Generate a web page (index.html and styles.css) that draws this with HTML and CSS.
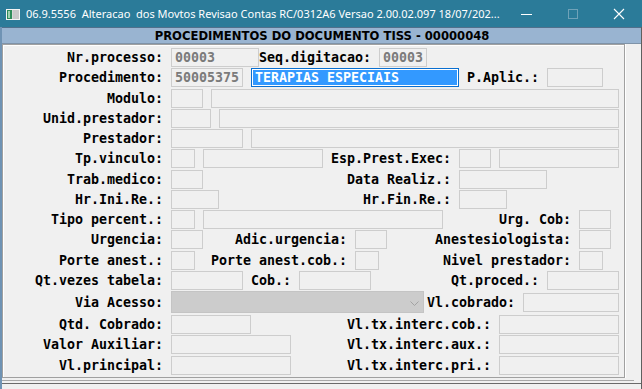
FILE: index.html
```html
<!DOCTYPE html>
<html>
<head>
    <title>Procedimentos do Documento TISS</title>
    <link rel="stylesheet" href="styles.css">
</head>
<body>
    <div class="window">
        <div class="titlebar">
            <svg class="app-icon" width="14" height="11" viewBox="0 0 14 11">
                <rect x="0.5" y="0.5" width="13" height="10" fill="#d8d8d8" stroke="#f4f4f4"/>
                <rect x="1" y="1" width="5" height="9" fill="#2e8c5a"/>
                <rect x="2" y="2" width="2" height="7" fill="#9fd1b0"/>
                <rect x="7" y="1" width="6" height="9" fill="#c9c9c9"/>
            </svg>
            <span class="title">06.9.5556  Alteracao  dos Movtos Revisao Contas RC/0312A6 Versao 2.00.02.097 18/07/202...</span>
            <div class="controls">
                <span class="ctl">
                    <svg width="12" height="12" viewBox="0 0 12 12"><path d="M0 6.5H11" stroke="#fff" stroke-width="1"/></svg>
                </span>
                <span class="ctl">
                    <svg width="12" height="12" viewBox="0 0 12 12"><rect x="1.5" y="1.5" width="9" height="9" fill="none" stroke="#6fa2b8"/></svg>
                </span>
                <span class="ctl">
                    <svg width="12" height="12" viewBox="0 0 12 12"><path d="M1 1L11 11M11 1L1 11" stroke="#fff" stroke-width="1.1"/></svg>
                </span>
            </div>
        </div>

        <div class="frame">
            <div class="caption">PROCEDIMENTOS DO DOCUMENTO TISS - 00000048</div>

            <div class="panel">
                <div class="row">
                    <span class="lbl w20">Nr.processo:</span>
                    <span class="fld w11">00003</span>
                    <span class="lbl w14">Seq.digitacao:</span>
                    <span class="fld w6">00003</span>
                </div>
                <div class="row">
                    <span class="lbl w20">Procedimento:</span>
                    <span class="fld w9">50005375</span>
                    <span class="fld w26 selected">TERAPIAS ESPECIAIS</span>
                    <span class="lbl w10">P.Aplic.:</span>
                    <span class="fld w7"></span>
                </div>
                <div class="row">
                    <span class="lbl w20">Modulo:</span>
                    <span class="fld w4"></span>
                    <span class="fld w51"></span>
                </div>
                <div class="row">
                    <span class="lbl w20">Unid.prestador:</span>
                    <span class="fld w5"></span>
                    <span class="fld w50"></span>
                </div>
                <div class="row">
                    <span class="lbl w20">Prestador:</span>
                    <span class="fld w9"></span>
                    <span class="fld w46"></span>
                </div>
                <div class="row">
                    <span class="lbl w20">Tp.vinculo:</span>
                    <span class="fld w3"></span>
                    <span class="fld w15"></span>
                    <span class="lbl w16">Esp.Prest.Exec:</span>
                    <span class="fld w4"></span>
                    <span class="fld w15"></span>
                </div>
                <div class="row">
                    <span class="lbl w20">Trab.medico:</span>
                    <span class="fld w4"></span>
                    <span class="lbl w31">Data Realiz.:</span>
                    <span class="fld w11"></span>
                </div>
                <div class="row">
                    <span class="lbl w20">Hr.Ini.Re.:</span>
                    <span class="fld w6"></span>
                    <span class="lbl w29">Hr.Fin.Re.:</span>
                    <span class="fld w6"></span>
                </div>
                <div class="row">
                    <span class="lbl w20">Tipo percent.:</span>
                    <span class="fld w3"></span>
                    <span class="fld w30"></span>
                    <span class="lbl w16">Urg. Cob:</span>
                    <span class="fld w4"></span>
                </div>
                <div class="row">
                    <span class="lbl w20">Urgencia:</span>
                    <span class="fld w4"></span>
                    <span class="lbl w18">Adic.urgencia:</span>
                    <span class="fld w4"></span>
                    <span class="lbl w23">Anestesiologista:</span>
                    <span class="fld w4"></span>
                </div>
                <div class="row">
                    <span class="lbl w20">Porte anest.:</span>
                    <span class="fld w3"></span>
                    <span class="lbl w19">Porte anest.cob.:</span>
                    <span class="fld w3"></span>
                    <span class="lbl w24">Nivel prestador:</span>
                    <span class="fld w3"></span>
                </div>
                <div class="row">
                    <span class="lbl w20">Qt.vezes tabela:</span>
                    <span class="fld w9"></span>
                    <span class="lbl w6">Cob.:</span>
                    <span class="fld w9"></span>
                    <span class="lbl w21">Qt.proced.:</span>
                    <span class="fld w9"></span>
                </div>
                <div class="row row-combo">
                    <span class="lbl w20">Via Acesso:</span>
                    <span class="combo">
                        <svg class="chevron" width="9" height="5" viewBox="0 0 9 5"><path d="M0.5 0.5L4.5 4.5L8.5 0.5" fill="none" stroke="#a3a3a3"/></svg>
                    </span>
                    <span class="lbl w-vl">Vl.cobrado:</span>
                    <span class="fld w12"></span>
                </div>
                <div class="row row-low">
                    <span class="lbl w20">Qtd. Cobrado:</span>
                    <span class="fld w10"></span>
                    <span class="lbl w30">Vl.tx.interc.cob.:</span>
                    <span class="fld w15"></span>
                </div>
                <div class="row row-low">
                    <span class="lbl w20">Valor Auxiliar:</span>
                    <span class="fld w15"></span>
                    <span class="lbl w25">Vl.tx.interc.aux.:</span>
                    <span class="fld w15"></span>
                </div>
                <div class="row row-low">
                    <span class="lbl w20">Vl.principal:</span>
                    <span class="fld w15"></span>
                    <span class="lbl w25">Vl.tx.interc.pri.:</span>
                    <span class="fld w15"></span>
                </div>
            </div>

            <div class="base-line"></div>
            <div class="base-line dark"></div>
        </div>
    </div>
</body>
</html>
```

FILE: styles.css
```css
html, body {
    margin: 0;
    padding: 0;
}

body {
    background: #f0f0f0;
    width: 642px;
    height: 389px;
    overflow: hidden;
}

.window {
    width: 642px;
    height: 389px;
}

/* title bar */
.titlebar {
    height: 27px;
    background: #2b7b99;
    display: flex;
    align-items: center;
    color: #fff;
    font-family: "Noto Sans", sans-serif;
    font-size: 11px;
}

.app-icon {
    margin-left: 6px;
    margin-top: 1px;
    flex: none;
}

.title {
    margin-left: 6px;
    white-space: pre;
    flex: none;
}

.controls {
    display: flex;
    margin-left: auto;
}

.ctl {
    width: 46px;
    height: 27px;
    display: flex;
    align-items: center;
    justify-content: center;
}

/* frame */
.frame {
    border-left: 2px solid #6f93b4;
    border-right: 1px solid #5f5f5f;
    height: 362px;
}

.caption {
    height: 15px;
    border-top: 1px solid #50708c;
    border-bottom: 1px solid #7f93a8;
    background: #99b4d1;
    font-family: "DejaVu Sans", sans-serif;
    font-weight: bold;
    font-size: 11.6px;
    line-height: 16px;
    text-align: center;
    color: #000;
    padding-left: 1px;
}

.panel {
    width: 623px;
    box-sizing: border-box;
    border: 1px solid #a0a0a0;
    box-shadow: inset 1px 1px 0 #fff, 1px 0 0 #fff;
    padding: 2.5px 0 1.5px;
    font-family: "DejaVu Sans Mono", "Liberation Mono", monospace;
    font-weight: bold;
    font-size: 13.3px;
    color: #000;
}

.row {
    display: flex;
    align-items: center;
    height: 20.25px;
}

.row-combo {
    height: 23.25px;
}

.row-low {
    height: 20.5px;
}

.lbl {
    text-align: right;
    white-space: nowrap;
    flex: none;
    line-height: 19px;
}

.fld {
    flex: none;
    box-sizing: border-box;
    height: 19px;
    margin-left: 8px;
    border: 1px solid #cdcdcd;
    background: #f0f0f0;
    color: #7b7b7b;
    line-height: 17px;
    padding-left: 3px;
    white-space: nowrap;
    overflow: hidden;
}

.fld.selected {
    border-color: #0a6fd0;
    box-shadow: inset 0 0 0 1px #fff;
    background: #3399ff;
    color: #fff;
    padding-left: 3px;
}

.combo {
    flex: none;
    box-sizing: border-box;
    width: 253px;
    height: 22px;
    margin-left: 8px;
    background: #cccccc;
    border: 1px solid #c4c4c4;
    display: flex;
    align-items: center;
    justify-content: flex-end;
}

.chevron {
    margin-right: 4px;
    margin-top: 2px;
}

.w-vl { width: 91px; }

.lbl.w6 { width: 48px; }
.lbl.w10 { width: 80px; }
.lbl.w14 { width: 112px; }
.lbl.w16 { width: 128px; }
.lbl.w18 { width: 144px; }
.lbl.w19 { width: 152px; }
.lbl.w20 { width: 160px; }
.lbl.w21 { width: 168px; }
.lbl.w23 { width: 184px; }
.lbl.w24 { width: 192px; }
.lbl.w25 { width: 200px; }
.lbl.w29 { width: 232px; }
.lbl.w30 { width: 240px; }
.lbl.w31 { width: 248px; }

.fld.w3 { width: 24px; }
.fld.w4 { width: 32px; }
.fld.w5 { width: 40px; }
.fld.w6 { width: 48px; }
.fld.w7 { width: 56px; }
.fld.w9 { width: 72px; }
.fld.w10 { width: 80px; }
.fld.w11 { width: 88px; }
.fld.w12 { width: 96px; }
.fld.w15 { width: 120px; }
.fld.w26 { width: 208px; }
.fld.w30 { width: 240px; }
.fld.w46 { width: 368px; }
.fld.w50 { width: 400px; }
.fld.w51 { width: 408px; }

.base-line {
    margin-top: 2px;
    width: 632px;
    border-top: 1px solid #a8a8a8;
}

.base-line.dark {
    width: 639px;
    border-top-color: #6a6a6a;
}
```
